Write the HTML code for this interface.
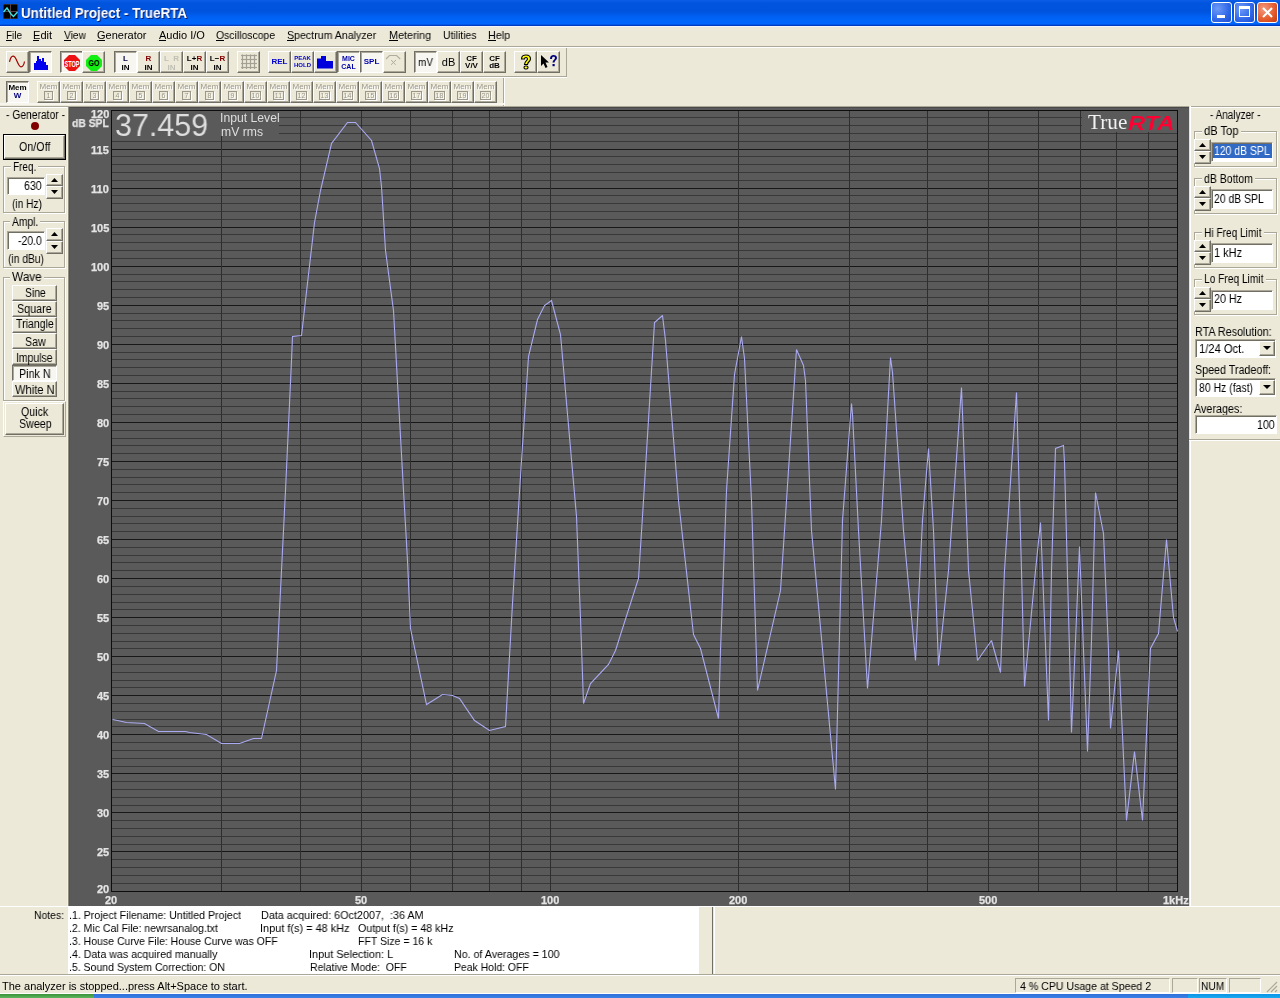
<!DOCTYPE html><html><head><meta charset="utf-8"><title>TrueRTA</title><style>
*{margin:0;padding:0;box-sizing:border-box}
html,body{width:1280px;height:998px;overflow:hidden;background:#ece9d8;font-family:"Liberation Sans",sans-serif;font-size:11px;color:#000}
.a{position:absolute}
.t{position:absolute;white-space:nowrap;line-height:1;will-change:transform}
.btn{position:absolute;background:#ece9d8;border-top:1px solid #fff;border-left:1px solid #fff;border-right:1px solid #716f64;border-bottom:1px solid #716f64;box-shadow:inset -1px -1px 0 #aca899}
.prs{position:absolute;background:#f7f6f1;border-top:1px solid #716f64;border-left:1px solid #716f64;border-right:1px solid #fff;border-bottom:1px solid #fff;box-shadow:inset 1px 1px 0 #aca899}
.grp{position:absolute;border:1px solid #d0d0bf;border-radius:2px}
.edit{position:absolute;background:#fff;border-top:1px solid #aca899;border-left:1px solid #aca899;border-right:1px solid #fff;border-bottom:1px solid #fff;box-shadow:inset 1px 1px 0 #716f64}
u{text-decoration:none;border-bottom:1px solid #000}
</style></head><body>
<div class="a" style="left:0;top:0;width:1280px;height:26px;background:linear-gradient(#0b5fea 0px,#0a5ae4 1px,#0054dd 3px,#0053dc 11px,#005cec 15px,#0064f8 19px,#0066fc 24px,#0046d0 25px,#0036b2 26px)"></div>
<div class="a" style="left:0;top:26px;width:1280px;height:1px;background:#f2f4fa"></div>
<svg class="a" style="left:3px;top:4px" width="15" height="15" viewBox="0 0 15 15"><rect x="0" y="0" width="15" height="15" fill="#555"/><rect x="0.5" y="0.5" width="14" height="14" fill="#000"/><line x1="7.5" y1="0" x2="7.5" y2="15" stroke="#5a4040" stroke-width="1"/><line x1="0" y1="7.5" x2="15" y2="7.5" stroke="#5a4040" stroke-width="1"/><polyline points="0.5,8 4,4 8,10 10.5,12.5 14.5,8" fill="none" stroke="#40e0e0" stroke-width="1.4"/></svg>
<div class="t" style="left:21.00px;top:6.15px;font-size:14px;line-height:14px;font-weight:bold;color:#fff;transform:scaleX(0.9591);transform-origin:0 0;text-shadow:1px 1px 0 #0a1e6e;">Untitled Project - TrueRTA</div>
<div class="a" style="left:1211px;top:2px;width:21px;height:21px;border:1px solid #fff;border-radius:3px;background:radial-gradient(circle at 30% 30%,#6e9bf7,#2f67e8 60%,#1f4fd0)"></div>
<div class="a" style="left:1234px;top:2px;width:21px;height:21px;border:1px solid #fff;border-radius:3px;background:radial-gradient(circle at 30% 30%,#6e9bf7,#2f67e8 60%,#1f4fd0)"></div>
<div class="a" style="left:1257px;top:2px;width:21px;height:21px;border:1px solid #fff;border-radius:3px;background:radial-gradient(circle at 30% 30%,#f49a7c,#e35a2c 60%,#c23d10)"></div>
<div class="a" style="left:1217px;top:15px;width:8px;height:3px;background:#fff"></div>
<div class="a" style="left:1239px;top:6px;width:11px;height:11px;border:1px solid #fff;border-top:3px solid #fff"></div>
<svg class="a" style="left:1257px;top:2px" width="21" height="21"><line x1="6" y1="6" x2="15" y2="15" stroke="#fff" stroke-width="2"/><line x1="15" y1="6" x2="6" y2="15" stroke="#fff" stroke-width="2"/></svg>
<div class="t" style="left:6.00px;top:29.69px;font-size:11px;line-height:11px;transform:scaleX(0.9087);transform-origin:0 0;">File</div>
<div class="t" style="left:33.00px;top:29.69px;font-size:11px;line-height:11px;transform:scaleX(1.0054);transform-origin:0 0;">Edit</div>
<div class="t" style="left:64.00px;top:29.69px;font-size:11px;line-height:11px;transform:scaleX(0.9283);transform-origin:0 0;">View</div>
<div class="t" style="left:97.00px;top:29.69px;font-size:11px;line-height:11px;">Generator</div>
<div class="t" style="left:159.00px;top:29.69px;font-size:11px;line-height:11px;transform:scaleX(0.9935);transform-origin:0 0;">Audio I/O</div>
<div class="t" style="left:216.00px;top:29.69px;font-size:11px;line-height:11px;transform:scaleX(0.9479);transform-origin:0 0;">Oscilloscope</div>
<div class="t" style="left:287.00px;top:29.69px;font-size:11px;line-height:11px;transform:scaleX(0.9650);transform-origin:0 0;">Spectrum Analyzer</div>
<div class="t" style="left:389.00px;top:29.69px;font-size:11px;line-height:11px;transform:scaleX(0.9841);transform-origin:0 0;">Metering</div>
<div class="t" style="left:443.00px;top:29.69px;font-size:11px;line-height:11px;transform:scaleX(0.9458);transform-origin:0 0;">Utilities</div>
<div class="t" style="left:488.00px;top:29.69px;font-size:11px;line-height:11px;transform:scaleX(0.9775);transform-origin:0 0;">Help</div>
<div class="a" style="left:6px;top:40px;width:6px;height:1px;background:#000"></div>
<div class="a" style="left:33px;top:40px;width:6px;height:1px;background:#000"></div>
<div class="a" style="left:64px;top:40px;width:7px;height:1px;background:#000"></div>
<div class="a" style="left:97px;top:40px;width:8px;height:1px;background:#000"></div>
<div class="a" style="left:159px;top:40px;width:7px;height:1px;background:#000"></div>
<div class="a" style="left:216px;top:40px;width:8px;height:1px;background:#000"></div>
<div class="a" style="left:287px;top:40px;width:7px;height:1px;background:#000"></div>
<div class="a" style="left:389px;top:40px;width:9px;height:1px;background:#000"></div>
<div class="a" style="left:488px;top:40px;width:8px;height:1px;background:#000"></div>
<div class="a" style="left:0;top:46px;width:1280px;height:1px;background:#aca899"></div>
<div class="a" style="left:0;top:47px;width:1280px;height:1px;background:#fff"></div>
<div class="a" style="left:0;top:76px;width:567px;height:1px;background:#aca899"></div>
<div class="a" style="left:0;top:77px;width:567px;height:1px;background:#fff"></div>
<div class="a" style="left:566px;top:48px;width:1px;height:29px;background:#aca899"></div>
<div class="a" style="left:503px;top:78px;width:1px;height:28px;background:#aca899"></div>
<div class="a" style="left:504px;top:78px;width:1px;height:28px;background:#fff"></div>
<div class="a" style="left:0;top:103px;width:504px;height:2px;background:#f6f5ee"></div>
<div class="a" style="left:0;top:106px;width:1280px;height:1px;background:#aca899"></div>
<div class="a" style="left:0;top:107px;width:1280px;height:1px;background:#fff"></div>
<div class="btn" style="left:6px;top:51px;width:23px;height:22px"><svg class="a" style="left:0;top:0" width="21" height="20"><path d="M2.5,9.8 C3.5,5.5 4.8,4.2 6,4.2 C8,4.2 9.3,7.5 10,9.2 C11,11.5 12.5,14.8 14,14.8 C15.5,14.8 17,12.5 17.5,9.5" fill="none" stroke="#a00000" stroke-width="1.2"/></svg></div>
<div class="prs" style="left:29px;top:51px;width:23px;height:22px"><svg class="a" style="left:3px;top:3px" width="18" height="16"><path d="M1,15 L1,8 L3,8 L3,6 L4,6 L4,1 L6,1 L6,4 L8,4 L8,6 L9,6 L9,3 L11,3 L11,7 L13,7 L13,10 L15,10 L15,15 Z" fill="#0000ee"/></svg></div>
<div class="prs" style="left:60px;top:51px;width:23px;height:22px"><svg class="a" style="left:3px;top:3px" width="16" height="16"><polygon points="5,0 11,0 16,5 16,11 11,16 5,16 0,11 0,5" fill="#ee1111"/><text x="0.5" y="11.8" font-family="Liberation Sans" font-weight="bold" font-size="9" fill="#fff" textLength="15" lengthAdjust="spacingAndGlyphs">STOP</text></svg></div>
<div class="btn" style="left:82px;top:51px;width:23px;height:22px"><svg class="a" style="left:3px;top:3px" width="16" height="16"><polygon points="5,0 11,0 16,5 16,11 11,16 5,16 0,11 0,5" fill="#11ee11"/><text x="2.5" y="11" font-family="Liberation Sans" font-weight="bold" font-size="9" fill="#000" textLength="11" lengthAdjust="spacingAndGlyphs">GO</text></svg></div>
<div class="prs" style="left:114px;top:51px;width:23px;height:22px"><div class="t" style="left:0;width:21px;top:3px;text-align:center;font-size:8px;font-weight:bold;color:#000040">L</div><div class="t" style="left:0;width:21px;top:12px;text-align:center;font-size:8px;font-weight:bold">IN</div></div>
<div class="btn" style="left:137px;top:51px;width:23px;height:22px"><div class="t" style="left:0;width:21px;top:3px;text-align:center;font-size:8px;font-weight:bold;color:#800000">R</div><div class="t" style="left:0;width:21px;top:12px;text-align:center;font-size:8px;font-weight:bold">IN</div></div>
<div class="btn" style="left:160px;top:51px;width:23px;height:22px"><div class="t" style="left:0;width:21px;top:3px;text-align:center;font-size:8px;font-weight:bold;color:#c0bfb4">L&nbsp;&nbsp;R</div><div class="t" style="left:0;width:21px;top:12px;text-align:center;font-size:8px;font-weight:bold;color:#c0bfb4">IN</div></div>
<div class="btn" style="left:183px;top:51px;width:23px;height:22px"><div class="t" style="left:0;width:21px;top:3px;text-align:center;font-size:8px;font-weight:bold">L+<span style="color:#800000">R</span></div><div class="t" style="left:0;width:21px;top:12px;text-align:center;font-size:8px;font-weight:bold">IN</div></div>
<div class="btn" style="left:206px;top:51px;width:23px;height:22px"><div class="t" style="left:0;width:21px;top:3px;text-align:center;font-size:8px;font-weight:bold">L&minus;<span style="color:#800000">R</span></div><div class="t" style="left:0;width:21px;top:12px;text-align:center;font-size:8px;font-weight:bold">IN</div></div>
<div class="btn" style="left:237px;top:51px;width:23px;height:22px"><svg class="a" style="left:3px;top:2px" width="16" height="16"><line x1="1.5" y1="0.5" x2="1.5" y2="15" stroke="#a4a194" stroke-width="1.2"/><line x1="5.5" y1="0.5" x2="5.5" y2="15" stroke="#a4a194" stroke-width="1.2"/><line x1="9.5" y1="0.5" x2="9.5" y2="15" stroke="#a4a194" stroke-width="1.2"/><line x1="13.5" y1="0.5" x2="13.5" y2="15" stroke="#a4a194" stroke-width="1.2"/><line x1="0" y1="1.5" x2="16" y2="1.5" stroke="#a4a194" stroke-width="1.2"/><line x1="0" y1="5.5" x2="16" y2="5.5" stroke="#a4a194" stroke-width="1.2"/><line x1="0" y1="9.5" x2="16" y2="9.5" stroke="#a4a194" stroke-width="1.2"/><line x1="0" y1="13.5" x2="16" y2="13.5" stroke="#a4a194" stroke-width="1.2"/></svg></div>
<div class="btn" style="left:268px;top:51px;width:23px;height:22px"><div class="t" style="left:0;width:21px;top:6px;text-align:center;font-size:8px;font-weight:bold;color:#0000cc">REL</div></div>
<div class="btn" style="left:291px;top:51px;width:23px;height:22px"><div class="t" style="left:0;width:21px;top:3px;text-align:center;font-size:6px;font-weight:bold;color:#0000cc;line-height:7px">PEAK<br>HOLD</div></div>
<div class="btn" style="left:314px;top:51px;width:23px;height:22px"><svg class="a" style="left:2px;top:4px" width="17" height="13"><path d="M0,12.5 L0,2.5 L4,2.5 L4,0 L9,0 L9,5 L16,5 L16,12.5 Z" fill="#0000dd"/></svg></div>
<div class="prs" style="left:337px;top:51px;width:23px;height:22px"><div class="t" style="left:0;width:21px;top:3px;text-align:center;font-size:7px;font-weight:bold;color:#0000aa;line-height:8px">MIC<br>CAL</div></div>
<div class="prs" style="left:360px;top:51px;width:23px;height:22px"><div class="t" style="left:0;width:21px;top:6px;text-align:center;font-size:8px;font-weight:bold;color:#0000aa">SPL</div></div>
<div class="btn" style="left:383px;top:51px;width:23px;height:22px"><svg class="a" style="left:0;top:0" width="21" height="20"><path d="M2,7 L5.5,3.5 L12.6,3.5 L16.2,7" fill="none" stroke="#b0ada0" stroke-width="1.1"/><path d="M7.2,8 L11.6,12.8 M12,8 L7,12.8" stroke="#b0ada0" stroke-width="1"/></svg></div>
<div class="prs" style="left:414px;top:51px;width:23px;height:22px"><div class="t" style="left:0;width:21px;top:5px;text-align:center;font-size:11px;line-height:11px;transform:scaleX(0.9)">mV</div></div>
<div class="btn" style="left:437px;top:51px;width:23px;height:22px"><div class="t" style="left:0;width:21px;top:5px;text-align:center;font-size:11px;line-height:11px">dB</div></div>
<div class="btn" style="left:460px;top:51px;width:23px;height:22px"><div class="t" style="left:0;width:21px;top:3px;text-align:center;font-size:8px;font-weight:bold;line-height:7px">CF<br>V/V</div></div>
<div class="btn" style="left:483px;top:51px;width:23px;height:22px"><div class="t" style="left:0;width:21px;top:3px;text-align:center;font-size:8px;font-weight:bold;line-height:7px">CF<br>dB</div></div>
<div class="btn" style="left:514px;top:51px;width:23px;height:22px"><svg class="a" style="left:4px;top:2px" width="14" height="17"><path d="M2.5,5 C2.5,1.5 5,1 7,1 C9.5,1 11.5,2.5 11.5,5 C11.5,7.5 8.5,8 8.5,10.5 L5.5,10.5 C5.5,7 8.5,6.5 8.5,5 C8.5,4 8,3.5 7,3.5 C6,3.5 5.5,4.2 5.5,5 Z" fill="#ffff00" stroke="#000" stroke-width="1.1"/><rect x="5" y="12" width="4" height="3" rx="1.5" fill="#ffff00" stroke="#000" stroke-width="1.1"/></svg></div>
<div class="btn" style="left:537px;top:51px;width:23px;height:22px"><svg class="a" style="left:2px;top:2px" width="19" height="17"><path d="M1,1 L1,12 L3.5,9.5 L5.5,14 L7.5,13 L5.5,8.5 L9,8.5 Z" fill="#000"/><path d="M10,5 C10,2 11.5,1 13.5,1 C15.5,1 17,2 17,4 C17,6 14.5,6.5 14.5,8.5 L12.5,8.5 C12.5,6 15,5.5 15,4 C15,3 14.5,2.7 13.5,2.7 C12.5,2.7 12,3.3 12,5 Z" fill="#000080"/><rect x="12.5" y="10" width="2.2" height="2.2" fill="#000080"/></svg></div>
<div class="prs" style="left:6px;top:81px;width:23px;height:22px"><div class="t" style="left:0;width:21px;top:2px;text-align:center;font-size:8px;font-weight:bold;line-height:8px">Mem</div><div class="t" style="left:0;width:21px;top:10px;text-align:center;font-size:8px;font-weight:bold;color:#000080;line-height:8px">W</div></div>
<div class="btn" style="left:37px;top:81px;width:23px;height:22px"><div class="t" style="left:0;width:21px;top:1px;text-align:center;font-size:8px;color:#9a978a;line-height:8px;text-shadow:1px 1px 0 #fff">Mem</div><div class="a" style="left:6px;top:9px;width:9px;height:9px;border:1px solid #9a978a;box-shadow:1px 1px 0 #fff"></div><div class="t" style="left:0;width:21px;top:10px;text-align:center;font-size:7px;color:#9a978a;line-height:8px;text-shadow:1px 1px 0 #fff">1</div></div>
<div class="btn" style="left:60px;top:81px;width:23px;height:22px"><div class="t" style="left:0;width:21px;top:1px;text-align:center;font-size:8px;color:#9a978a;line-height:8px;text-shadow:1px 1px 0 #fff">Mem</div><div class="a" style="left:6px;top:9px;width:9px;height:9px;border:1px solid #9a978a;box-shadow:1px 1px 0 #fff"></div><div class="t" style="left:0;width:21px;top:10px;text-align:center;font-size:7px;color:#9a978a;line-height:8px;text-shadow:1px 1px 0 #fff">2</div></div>
<div class="btn" style="left:83px;top:81px;width:23px;height:22px"><div class="t" style="left:0;width:21px;top:1px;text-align:center;font-size:8px;color:#9a978a;line-height:8px;text-shadow:1px 1px 0 #fff">Mem</div><div class="a" style="left:6px;top:9px;width:9px;height:9px;border:1px solid #9a978a;box-shadow:1px 1px 0 #fff"></div><div class="t" style="left:0;width:21px;top:10px;text-align:center;font-size:7px;color:#9a978a;line-height:8px;text-shadow:1px 1px 0 #fff">3</div></div>
<div class="btn" style="left:106px;top:81px;width:23px;height:22px"><div class="t" style="left:0;width:21px;top:1px;text-align:center;font-size:8px;color:#9a978a;line-height:8px;text-shadow:1px 1px 0 #fff">Mem</div><div class="a" style="left:6px;top:9px;width:9px;height:9px;border:1px solid #9a978a;box-shadow:1px 1px 0 #fff"></div><div class="t" style="left:0;width:21px;top:10px;text-align:center;font-size:7px;color:#9a978a;line-height:8px;text-shadow:1px 1px 0 #fff">4</div></div>
<div class="btn" style="left:129px;top:81px;width:23px;height:22px"><div class="t" style="left:0;width:21px;top:1px;text-align:center;font-size:8px;color:#9a978a;line-height:8px;text-shadow:1px 1px 0 #fff">Mem</div><div class="a" style="left:6px;top:9px;width:9px;height:9px;border:1px solid #9a978a;box-shadow:1px 1px 0 #fff"></div><div class="t" style="left:0;width:21px;top:10px;text-align:center;font-size:7px;color:#9a978a;line-height:8px;text-shadow:1px 1px 0 #fff">5</div></div>
<div class="btn" style="left:152px;top:81px;width:23px;height:22px"><div class="t" style="left:0;width:21px;top:1px;text-align:center;font-size:8px;color:#9a978a;line-height:8px;text-shadow:1px 1px 0 #fff">Mem</div><div class="a" style="left:6px;top:9px;width:9px;height:9px;border:1px solid #9a978a;box-shadow:1px 1px 0 #fff"></div><div class="t" style="left:0;width:21px;top:10px;text-align:center;font-size:7px;color:#9a978a;line-height:8px;text-shadow:1px 1px 0 #fff">6</div></div>
<div class="btn" style="left:175px;top:81px;width:23px;height:22px"><div class="t" style="left:0;width:21px;top:1px;text-align:center;font-size:8px;color:#9a978a;line-height:8px;text-shadow:1px 1px 0 #fff">Mem</div><div class="a" style="left:6px;top:9px;width:9px;height:9px;border:1px solid #9a978a;box-shadow:1px 1px 0 #fff"></div><div class="t" style="left:0;width:21px;top:10px;text-align:center;font-size:7px;color:#9a978a;line-height:8px;text-shadow:1px 1px 0 #fff">7</div></div>
<div class="btn" style="left:198px;top:81px;width:23px;height:22px"><div class="t" style="left:0;width:21px;top:1px;text-align:center;font-size:8px;color:#9a978a;line-height:8px;text-shadow:1px 1px 0 #fff">Mem</div><div class="a" style="left:6px;top:9px;width:9px;height:9px;border:1px solid #9a978a;box-shadow:1px 1px 0 #fff"></div><div class="t" style="left:0;width:21px;top:10px;text-align:center;font-size:7px;color:#9a978a;line-height:8px;text-shadow:1px 1px 0 #fff">8</div></div>
<div class="btn" style="left:221px;top:81px;width:23px;height:22px"><div class="t" style="left:0;width:21px;top:1px;text-align:center;font-size:8px;color:#9a978a;line-height:8px;text-shadow:1px 1px 0 #fff">Mem</div><div class="a" style="left:6px;top:9px;width:9px;height:9px;border:1px solid #9a978a;box-shadow:1px 1px 0 #fff"></div><div class="t" style="left:0;width:21px;top:10px;text-align:center;font-size:7px;color:#9a978a;line-height:8px;text-shadow:1px 1px 0 #fff">9</div></div>
<div class="btn" style="left:244px;top:81px;width:23px;height:22px"><div class="t" style="left:0;width:21px;top:1px;text-align:center;font-size:8px;color:#9a978a;line-height:8px;text-shadow:1px 1px 0 #fff">Mem</div><div class="a" style="left:5px;top:9px;width:11px;height:9px;border:1px solid #9a978a;box-shadow:1px 1px 0 #fff"></div><div class="t" style="left:0;width:21px;top:10px;text-align:center;font-size:7px;color:#9a978a;line-height:8px;text-shadow:1px 1px 0 #fff">10</div></div>
<div class="btn" style="left:267px;top:81px;width:23px;height:22px"><div class="t" style="left:0;width:21px;top:1px;text-align:center;font-size:8px;color:#9a978a;line-height:8px;text-shadow:1px 1px 0 #fff">Mem</div><div class="a" style="left:5px;top:9px;width:11px;height:9px;border:1px solid #9a978a;box-shadow:1px 1px 0 #fff"></div><div class="t" style="left:0;width:21px;top:10px;text-align:center;font-size:7px;color:#9a978a;line-height:8px;text-shadow:1px 1px 0 #fff">11</div></div>
<div class="btn" style="left:290px;top:81px;width:23px;height:22px"><div class="t" style="left:0;width:21px;top:1px;text-align:center;font-size:8px;color:#9a978a;line-height:8px;text-shadow:1px 1px 0 #fff">Mem</div><div class="a" style="left:5px;top:9px;width:11px;height:9px;border:1px solid #9a978a;box-shadow:1px 1px 0 #fff"></div><div class="t" style="left:0;width:21px;top:10px;text-align:center;font-size:7px;color:#9a978a;line-height:8px;text-shadow:1px 1px 0 #fff">12</div></div>
<div class="btn" style="left:313px;top:81px;width:23px;height:22px"><div class="t" style="left:0;width:21px;top:1px;text-align:center;font-size:8px;color:#9a978a;line-height:8px;text-shadow:1px 1px 0 #fff">Mem</div><div class="a" style="left:5px;top:9px;width:11px;height:9px;border:1px solid #9a978a;box-shadow:1px 1px 0 #fff"></div><div class="t" style="left:0;width:21px;top:10px;text-align:center;font-size:7px;color:#9a978a;line-height:8px;text-shadow:1px 1px 0 #fff">13</div></div>
<div class="btn" style="left:336px;top:81px;width:23px;height:22px"><div class="t" style="left:0;width:21px;top:1px;text-align:center;font-size:8px;color:#9a978a;line-height:8px;text-shadow:1px 1px 0 #fff">Mem</div><div class="a" style="left:5px;top:9px;width:11px;height:9px;border:1px solid #9a978a;box-shadow:1px 1px 0 #fff"></div><div class="t" style="left:0;width:21px;top:10px;text-align:center;font-size:7px;color:#9a978a;line-height:8px;text-shadow:1px 1px 0 #fff">14</div></div>
<div class="btn" style="left:359px;top:81px;width:23px;height:22px"><div class="t" style="left:0;width:21px;top:1px;text-align:center;font-size:8px;color:#9a978a;line-height:8px;text-shadow:1px 1px 0 #fff">Mem</div><div class="a" style="left:5px;top:9px;width:11px;height:9px;border:1px solid #9a978a;box-shadow:1px 1px 0 #fff"></div><div class="t" style="left:0;width:21px;top:10px;text-align:center;font-size:7px;color:#9a978a;line-height:8px;text-shadow:1px 1px 0 #fff">15</div></div>
<div class="btn" style="left:382px;top:81px;width:23px;height:22px"><div class="t" style="left:0;width:21px;top:1px;text-align:center;font-size:8px;color:#9a978a;line-height:8px;text-shadow:1px 1px 0 #fff">Mem</div><div class="a" style="left:5px;top:9px;width:11px;height:9px;border:1px solid #9a978a;box-shadow:1px 1px 0 #fff"></div><div class="t" style="left:0;width:21px;top:10px;text-align:center;font-size:7px;color:#9a978a;line-height:8px;text-shadow:1px 1px 0 #fff">16</div></div>
<div class="btn" style="left:405px;top:81px;width:23px;height:22px"><div class="t" style="left:0;width:21px;top:1px;text-align:center;font-size:8px;color:#9a978a;line-height:8px;text-shadow:1px 1px 0 #fff">Mem</div><div class="a" style="left:5px;top:9px;width:11px;height:9px;border:1px solid #9a978a;box-shadow:1px 1px 0 #fff"></div><div class="t" style="left:0;width:21px;top:10px;text-align:center;font-size:7px;color:#9a978a;line-height:8px;text-shadow:1px 1px 0 #fff">17</div></div>
<div class="btn" style="left:428px;top:81px;width:23px;height:22px"><div class="t" style="left:0;width:21px;top:1px;text-align:center;font-size:8px;color:#9a978a;line-height:8px;text-shadow:1px 1px 0 #fff">Mem</div><div class="a" style="left:5px;top:9px;width:11px;height:9px;border:1px solid #9a978a;box-shadow:1px 1px 0 #fff"></div><div class="t" style="left:0;width:21px;top:10px;text-align:center;font-size:7px;color:#9a978a;line-height:8px;text-shadow:1px 1px 0 #fff">18</div></div>
<div class="btn" style="left:451px;top:81px;width:23px;height:22px"><div class="t" style="left:0;width:21px;top:1px;text-align:center;font-size:8px;color:#9a978a;line-height:8px;text-shadow:1px 1px 0 #fff">Mem</div><div class="a" style="left:5px;top:9px;width:11px;height:9px;border:1px solid #9a978a;box-shadow:1px 1px 0 #fff"></div><div class="t" style="left:0;width:21px;top:10px;text-align:center;font-size:7px;color:#9a978a;line-height:8px;text-shadow:1px 1px 0 #fff">19</div></div>
<div class="btn" style="left:474px;top:81px;width:23px;height:22px"><div class="t" style="left:0;width:21px;top:1px;text-align:center;font-size:8px;color:#9a978a;line-height:8px;text-shadow:1px 1px 0 #fff">Mem</div><div class="a" style="left:5px;top:9px;width:11px;height:9px;border:1px solid #9a978a;box-shadow:1px 1px 0 #fff"></div><div class="t" style="left:0;width:21px;top:10px;text-align:center;font-size:7px;color:#9a978a;line-height:8px;text-shadow:1px 1px 0 #fff">20</div></div>
<div class="a" style="left:0;top:108px;width:69px;height:798px;background:#ece9d8"></div>
<div class="a" style="left:67px;top:107px;width:2px;height:799px;background:linear-gradient(90deg,#f3f1e6 0 1px,#8f8c80 1px)"></div>
<div class="t" style="left:6.00px;top:108.84px;font-size:12px;line-height:12px;transform:scaleX(0.8589);transform-origin:0 0;">- Generator -</div>
<div class="a" style="left:31px;top:122px;width:8px;height:8px;border-radius:50%;background:#800000"></div>
<div class="a" style="left:3px;top:134px;width:63px;height:26px;border:1px solid #000"><div class="btn" style="left:0;top:0;width:61px;height:24px"></div></div>
<div class="t" style="left:19.00px;top:140.84px;font-size:12px;line-height:12px;transform:scaleX(0.8940);transform-origin:0 0;">On/Off</div>
<div class="a" style="left:3px;top:166px;width:62px;height:47px;border:1px solid #aca899;box-shadow:1px 1px 0 #fff, inset 1px 1px 0 #fff"></div>
<div class="a" style="left:11px;top:165px;width:27px;height:4px;background:#ece9d8"></div>
<div class="t" style="left:13.00px;top:160.84px;font-size:12px;line-height:12px;transform:scaleX(0.8311);transform-origin:0 0;">Freq.</div>
<div class="edit" style="left:7px;top:177px;width:38px;height:18px"></div>
<div class="t" style="left:24.00px;top:179.84px;font-size:12px;line-height:12px;transform:scaleX(0.8846);transform-origin:0 0;">630</div>
<div class="btn" style="left:46px;top:174px;width:17px;height:12px"><svg class="a" style="left:4px;top:3px" width="7" height="4"><polygon points="3.5,0 7,4 0,4" fill="#000"/></svg></div>
<div class="btn" style="left:46px;top:186px;width:17px;height:13px"><svg class="a" style="left:4px;top:3px" width="7" height="4"><polygon points="0,0 7,0 3.5,4" fill="#000"/></svg></div>
<div class="t" style="left:12.00px;top:197.84px;font-size:12px;line-height:12px;transform:scaleX(0.8490);transform-origin:0 0;">(in Hz)</div>
<div class="a" style="left:3px;top:221px;width:62px;height:47px;border:1px solid #aca899;box-shadow:1px 1px 0 #fff, inset 1px 1px 0 #fff"></div>
<div class="a" style="left:10px;top:220px;width:30px;height:4px;background:#ece9d8"></div>
<div class="t" style="left:12.00px;top:215.84px;font-size:12px;line-height:12px;transform:scaleX(0.8570);transform-origin:0 0;">Ampl.</div>
<div class="edit" style="left:7px;top:231px;width:38px;height:19px"></div>
<div class="t" style="left:18.00px;top:234.84px;font-size:12px;line-height:12px;transform:scaleX(0.8671);transform-origin:0 0;">-20.0</div>
<div class="btn" style="left:46px;top:228px;width:17px;height:13px"><svg class="a" style="left:4px;top:3px" width="7" height="4"><polygon points="3.5,0 7,4 0,4" fill="#000"/></svg></div>
<div class="btn" style="left:46px;top:241px;width:17px;height:13px"><svg class="a" style="left:4px;top:3px" width="7" height="4"><polygon points="0,0 7,0 3.5,4" fill="#000"/></svg></div>
<div class="t" style="left:8.00px;top:252.84px;font-size:12px;line-height:12px;transform:scaleX(0.8567);transform-origin:0 0;">(in dBu)</div>
<div class="a" style="left:3px;top:277px;width:62px;height:124px;border:1px solid #aca899;box-shadow:1px 1px 0 #fff, inset 1px 1px 0 #fff"></div>
<div class="a" style="left:10px;top:276px;width:34px;height:4px;background:#ece9d8"></div>
<div class="t" style="left:12.00px;top:270.84px;font-size:12px;line-height:12px;transform:scaleX(0.9818);transform-origin:0 0;">Wave</div>
<div class="btn" style="left:12px;top:285px;width:45px;height:16px"></div>
<div class="t" style="left:25.00px;top:286.84px;font-size:12px;line-height:12px;transform:scaleX(0.8626);transform-origin:0 0;">Sine</div>
<div class="btn" style="left:12px;top:301px;width:45px;height:16px"></div>
<div class="t" style="left:17.00px;top:302.84px;font-size:12px;line-height:12px;transform:scaleX(0.8969);transform-origin:0 0;">Square</div>
<div class="btn" style="left:12px;top:317px;width:45px;height:16px"></div>
<div class="t" style="left:16.00px;top:317.84px;font-size:12px;line-height:12px;transform:scaleX(0.8789);transform-origin:0 0;">Triangle</div>
<div class="btn" style="left:12px;top:333px;width:45px;height:16px"></div>
<div class="t" style="left:25.00px;top:335.84px;font-size:12px;line-height:12px;transform:scaleX(0.8869);transform-origin:0 0;">Saw</div>
<div class="btn" style="left:12px;top:349px;width:45px;height:16px"></div>
<div class="t" style="left:16.13px;top:351.84px;font-size:12px;line-height:12px;transform:scaleX(0.8707);transform-origin:0 0;">Impulse</div>
<div class="prs" style="left:12px;top:365px;width:45px;height:16px"></div>
<div class="t" style="left:19.00px;top:367.84px;font-size:12px;line-height:12px;transform:scaleX(0.8939);transform-origin:0 0;">Pink N</div>
<div class="btn" style="left:12px;top:381px;width:45px;height:16px"></div>
<div class="t" style="left:15.00px;top:383.84px;font-size:12px;line-height:12px;transform:scaleX(0.9284);transform-origin:0 0;">White N</div>
<div class="a" style="left:3px;top:401px;width:63px;height:36px;border-top:1px solid #fff;border-left:1px solid #fff;border-right:1px solid #aca899;border-bottom:1px solid #aca899"></div>
<div class="btn" style="left:5px;top:403px;width:59px;height:32px"></div>
<div class="t" style="left:21.00px;top:405.84px;font-size:12px;line-height:12px;transform:scaleX(0.8840);transform-origin:0 0;">Quick</div>
<div class="t" style="left:19.00px;top:417.84px;font-size:12px;line-height:12px;transform:scaleX(0.8915);transform-origin:0 0;">Sweep</div>
<svg class="a" style="left:69px;top:107px" width="1120" height="799" shape-rendering="crispEdges">
<rect x="0" y="0" width="1120" height="799" fill="#5a5a5a"/><rect x="0" y="0" width="1120" height="1" fill="#4a4a48"/><rect x="0" y="0" width="1" height="799" fill="#55554f"/>
<line x1="42" y1="776.5" x2="1108" y2="776.5" stroke="#383838"/>
<line x1="42" y1="768.5" x2="1108" y2="768.5" stroke="#383838"/>
<line x1="42" y1="760.5" x2="1108" y2="760.5" stroke="#383838"/>
<line x1="42" y1="752.5" x2="1108" y2="752.5" stroke="#383838"/>
<line x1="42" y1="744.5" x2="1108" y2="744.5" stroke="#181818"/>
<line x1="42" y1="737.5" x2="1108" y2="737.5" stroke="#383838"/>
<line x1="42" y1="729.5" x2="1108" y2="729.5" stroke="#383838"/>
<line x1="42" y1="721.5" x2="1108" y2="721.5" stroke="#383838"/>
<line x1="42" y1="713.5" x2="1108" y2="713.5" stroke="#383838"/>
<line x1="42" y1="705.5" x2="1108" y2="705.5" stroke="#181818"/>
<line x1="42" y1="698.5" x2="1108" y2="698.5" stroke="#383838"/>
<line x1="42" y1="690.5" x2="1108" y2="690.5" stroke="#383838"/>
<line x1="42" y1="682.5" x2="1108" y2="682.5" stroke="#383838"/>
<line x1="42" y1="674.5" x2="1108" y2="674.5" stroke="#383838"/>
<line x1="42" y1="666.5" x2="1108" y2="666.5" stroke="#181818"/>
<line x1="42" y1="659.5" x2="1108" y2="659.5" stroke="#383838"/>
<line x1="42" y1="651.5" x2="1108" y2="651.5" stroke="#383838"/>
<line x1="42" y1="643.5" x2="1108" y2="643.5" stroke="#383838"/>
<line x1="42" y1="635.5" x2="1108" y2="635.5" stroke="#383838"/>
<line x1="42" y1="627.5" x2="1108" y2="627.5" stroke="#181818"/>
<line x1="42" y1="619.5" x2="1108" y2="619.5" stroke="#383838"/>
<line x1="42" y1="612.5" x2="1108" y2="612.5" stroke="#383838"/>
<line x1="42" y1="604.5" x2="1108" y2="604.5" stroke="#383838"/>
<line x1="42" y1="596.5" x2="1108" y2="596.5" stroke="#383838"/>
<line x1="42" y1="588.5" x2="1108" y2="588.5" stroke="#181818"/>
<line x1="42" y1="580.5" x2="1108" y2="580.5" stroke="#383838"/>
<line x1="42" y1="573.5" x2="1108" y2="573.5" stroke="#383838"/>
<line x1="42" y1="565.5" x2="1108" y2="565.5" stroke="#383838"/>
<line x1="42" y1="557.5" x2="1108" y2="557.5" stroke="#383838"/>
<line x1="42" y1="549.5" x2="1108" y2="549.5" stroke="#181818"/>
<line x1="42" y1="541.5" x2="1108" y2="541.5" stroke="#383838"/>
<line x1="42" y1="534.5" x2="1108" y2="534.5" stroke="#383838"/>
<line x1="42" y1="526.5" x2="1108" y2="526.5" stroke="#383838"/>
<line x1="42" y1="518.5" x2="1108" y2="518.5" stroke="#383838"/>
<line x1="42" y1="510.5" x2="1108" y2="510.5" stroke="#181818"/>
<line x1="42" y1="502.5" x2="1108" y2="502.5" stroke="#383838"/>
<line x1="42" y1="495.5" x2="1108" y2="495.5" stroke="#383838"/>
<line x1="42" y1="487.5" x2="1108" y2="487.5" stroke="#383838"/>
<line x1="42" y1="479.5" x2="1108" y2="479.5" stroke="#383838"/>
<line x1="42" y1="471.5" x2="1108" y2="471.5" stroke="#181818"/>
<line x1="42" y1="463.5" x2="1108" y2="463.5" stroke="#383838"/>
<line x1="42" y1="455.5" x2="1108" y2="455.5" stroke="#383838"/>
<line x1="42" y1="448.5" x2="1108" y2="448.5" stroke="#383838"/>
<line x1="42" y1="440.5" x2="1108" y2="440.5" stroke="#383838"/>
<line x1="42" y1="432.5" x2="1108" y2="432.5" stroke="#181818"/>
<line x1="42" y1="424.5" x2="1108" y2="424.5" stroke="#383838"/>
<line x1="42" y1="416.5" x2="1108" y2="416.5" stroke="#383838"/>
<line x1="42" y1="409.5" x2="1108" y2="409.5" stroke="#383838"/>
<line x1="42" y1="401.5" x2="1108" y2="401.5" stroke="#383838"/>
<line x1="42" y1="393.5" x2="1108" y2="393.5" stroke="#181818"/>
<line x1="42" y1="385.5" x2="1108" y2="385.5" stroke="#383838"/>
<line x1="42" y1="377.5" x2="1108" y2="377.5" stroke="#383838"/>
<line x1="42" y1="370.5" x2="1108" y2="370.5" stroke="#383838"/>
<line x1="42" y1="362.5" x2="1108" y2="362.5" stroke="#383838"/>
<line x1="42" y1="354.5" x2="1108" y2="354.5" stroke="#181818"/>
<line x1="42" y1="346.5" x2="1108" y2="346.5" stroke="#383838"/>
<line x1="42" y1="338.5" x2="1108" y2="338.5" stroke="#383838"/>
<line x1="42" y1="331.5" x2="1108" y2="331.5" stroke="#383838"/>
<line x1="42" y1="323.5" x2="1108" y2="323.5" stroke="#383838"/>
<line x1="42" y1="315.5" x2="1108" y2="315.5" stroke="#181818"/>
<line x1="42" y1="307.5" x2="1108" y2="307.5" stroke="#383838"/>
<line x1="42" y1="299.5" x2="1108" y2="299.5" stroke="#383838"/>
<line x1="42" y1="291.5" x2="1108" y2="291.5" stroke="#383838"/>
<line x1="42" y1="284.5" x2="1108" y2="284.5" stroke="#383838"/>
<line x1="42" y1="276.5" x2="1108" y2="276.5" stroke="#181818"/>
<line x1="42" y1="268.5" x2="1108" y2="268.5" stroke="#383838"/>
<line x1="42" y1="260.5" x2="1108" y2="260.5" stroke="#383838"/>
<line x1="42" y1="252.5" x2="1108" y2="252.5" stroke="#383838"/>
<line x1="42" y1="245.5" x2="1108" y2="245.5" stroke="#383838"/>
<line x1="42" y1="237.5" x2="1108" y2="237.5" stroke="#181818"/>
<line x1="42" y1="229.5" x2="1108" y2="229.5" stroke="#383838"/>
<line x1="42" y1="221.5" x2="1108" y2="221.5" stroke="#383838"/>
<line x1="42" y1="213.5" x2="1108" y2="213.5" stroke="#383838"/>
<line x1="42" y1="206.5" x2="1108" y2="206.5" stroke="#383838"/>
<line x1="42" y1="198.5" x2="1108" y2="198.5" stroke="#181818"/>
<line x1="42" y1="190.5" x2="1108" y2="190.5" stroke="#383838"/>
<line x1="42" y1="182.5" x2="1108" y2="182.5" stroke="#383838"/>
<line x1="42" y1="174.5" x2="1108" y2="174.5" stroke="#383838"/>
<line x1="42" y1="167.5" x2="1108" y2="167.5" stroke="#383838"/>
<line x1="42" y1="159.5" x2="1108" y2="159.5" stroke="#181818"/>
<line x1="42" y1="151.5" x2="1108" y2="151.5" stroke="#383838"/>
<line x1="42" y1="143.5" x2="1108" y2="143.5" stroke="#383838"/>
<line x1="42" y1="135.5" x2="1108" y2="135.5" stroke="#383838"/>
<line x1="42" y1="127.5" x2="1108" y2="127.5" stroke="#383838"/>
<line x1="42" y1="120.5" x2="1108" y2="120.5" stroke="#181818"/>
<line x1="42" y1="112.5" x2="1108" y2="112.5" stroke="#383838"/>
<line x1="42" y1="104.5" x2="1108" y2="104.5" stroke="#383838"/>
<line x1="42" y1="96.5" x2="1108" y2="96.5" stroke="#383838"/>
<line x1="42" y1="88.5" x2="1108" y2="88.5" stroke="#383838"/>
<line x1="42" y1="81.5" x2="1108" y2="81.5" stroke="#181818"/>
<line x1="42" y1="73.5" x2="1108" y2="73.5" stroke="#383838"/>
<line x1="42" y1="65.5" x2="1108" y2="65.5" stroke="#383838"/>
<line x1="42" y1="57.5" x2="1108" y2="57.5" stroke="#383838"/>
<line x1="42" y1="49.5" x2="1108" y2="49.5" stroke="#383838"/>
<line x1="42" y1="42.5" x2="1108" y2="42.5" stroke="#181818"/>
<line x1="42" y1="34.5" x2="1108" y2="34.5" stroke="#383838"/>
<line x1="42" y1="26.5" x2="1108" y2="26.5" stroke="#383838"/>
<line x1="42" y1="18.5" x2="1108" y2="18.5" stroke="#383838"/>
<line x1="42" y1="10.5" x2="1108" y2="10.5" stroke="#383838"/>
<line x1="152.5" y1="3" x2="152.5" y2="784" stroke="#2e2e2e"/>
<line x1="231.5" y1="3" x2="231.5" y2="784" stroke="#2e2e2e"/>
<line x1="292.5" y1="3" x2="292.5" y2="784" stroke="#2e2e2e"/>
<line x1="341.5" y1="3" x2="341.5" y2="784" stroke="#2e2e2e"/>
<line x1="383.5" y1="3" x2="383.5" y2="784" stroke="#2e2e2e"/>
<line x1="420.5" y1="3" x2="420.5" y2="784" stroke="#2e2e2e"/>
<line x1="452.5" y1="3" x2="452.5" y2="784" stroke="#2e2e2e"/>
<line x1="481.5" y1="3" x2="481.5" y2="784" stroke="#2e2e2e"/>
<line x1="669.5" y1="3" x2="669.5" y2="784" stroke="#2e2e2e"/>
<line x1="780.5" y1="3" x2="780.5" y2="784" stroke="#2e2e2e"/>
<line x1="858.5" y1="3" x2="858.5" y2="784" stroke="#2e2e2e"/>
<line x1="919.5" y1="3" x2="919.5" y2="784" stroke="#2e2e2e"/>
<line x1="969.5" y1="3" x2="969.5" y2="784" stroke="#2e2e2e"/>
<line x1="1011.5" y1="3" x2="1011.5" y2="784" stroke="#2e2e2e"/>
<line x1="1047.5" y1="3" x2="1047.5" y2="784" stroke="#2e2e2e"/>
<line x1="1079.5" y1="3" x2="1079.5" y2="784" stroke="#2e2e2e"/>
<rect x="42.5" y="3.5" width="1066" height="781" fill="none" stroke="#0e0e0e"/>
<rect x="43" y="4" width="167" height="25" fill="#5a5a5a"/>
<rect x="1013" y="4" width="95" height="21" fill="#5a5a5a"/>
</svg>
<svg class="a" style="left:69px;top:107px" width="1120" height="799"><polyline points="43.5,612.5 48.5,613.5 57.5,615.5 75.5,616.5 89.5,624.5 116.5,624.5 120.5,625.5 137.5,627.5 152.5,636.5 170.5,636.5 184.5,631.5 192.5,631.5 207.5,563.5 216.5,383.5 222.5,253.5 223.5,229.5 232.5,228.5 236.5,193.5 245.5,115.5 251.5,83.5 262.5,36.5 278.5,15.5 286.5,15.5 302.5,33.5 310.5,61.5 312.5,79.5 316.5,143.5 324.5,203.5 334.5,383.5 338.5,453.5 341.5,521.5 357.5,597.5 373.5,587.5 383.5,588.5 390.5,591.5 405.5,613.5 420.5,623.5 436.5,619.5 443.5,496.5 452.5,353.5 459.5,249.5 468.5,212.5 475.5,198.5 482.5,193.5 491.5,227.5 507.5,409.5 511.5,511.5 514.5,596.5 521.5,576.5 539.5,557.5 546.5,543.5 569.5,471.5 574.5,393.5 585.5,215.5 593.5,208.5 596.5,233.5 609.5,393.5 624.5,527.5 631.5,541.5 649.5,611.5 651.5,543.5 657.5,383.5 665.5,267.5 672.5,229.5 675.5,251.5 682.5,393.5 688.5,583.5 711.5,483.5 717.5,393.5 727.5,242.5 734.5,258.5 736.5,273.5 742.5,423.5 766.5,682.5 773.5,413.5 782.5,296.5 783.5,307.5 789.5,423.5 798.5,581.5 812.5,413.5 821.5,250.5 823.5,265.5 834.5,423.5 846.5,553.5 853.5,413.5 859.5,341.5 864.5,423.5 869.5,558.5 879.5,463.5 892.5,280.5 899.5,463.5 908.5,553.5 922.5,533.5 931.5,565.5 935.5,463.5 947.5,285.5 952.5,463.5 955.5,579.5 966.5,463.5 971.5,415.5 973.5,463.5 979.5,613.5 982.5,463.5 986.5,341.5 994.5,338.5 995.5,355.5 1000.5,543.5 1002.5,625.5 1006.5,533.5 1010.5,439.5 1014.5,543.5 1018.5,644.5 1022.5,533.5 1026.5,385.5 1034.5,426.5 1039.5,543.5 1041.5,621.5 1049.5,543.5 1057.5,713.5 1065.5,644.5 1073.5,713.5 1081.5,541.5 1089.5,526.5 1097.5,432.5 1104.5,510.5 1108.5,524.5" fill="none" stroke="#aaaaf2" stroke-width="1.1" stroke-linejoin="miter" stroke-miterlimit="2"/></svg>
<div class="t" style="left:96.88px;top:883.69px;font-size:11px;line-height:11px;font-weight:bold;color:#e4e4e4;-webkit-text-stroke:0.25px #e4e4e4;">20</div>
<div class="t" style="left:96.88px;top:846.69px;font-size:11px;line-height:11px;font-weight:bold;color:#e4e4e4;-webkit-text-stroke:0.25px #e4e4e4;">25</div>
<div class="t" style="left:96.88px;top:807.69px;font-size:11px;line-height:11px;font-weight:bold;color:#e4e4e4;-webkit-text-stroke:0.25px #e4e4e4;">30</div>
<div class="t" style="left:96.88px;top:768.69px;font-size:11px;line-height:11px;font-weight:bold;color:#e4e4e4;-webkit-text-stroke:0.25px #e4e4e4;">35</div>
<div class="t" style="left:96.88px;top:729.69px;font-size:11px;line-height:11px;font-weight:bold;color:#e4e4e4;-webkit-text-stroke:0.25px #e4e4e4;">40</div>
<div class="t" style="left:96.88px;top:690.69px;font-size:11px;line-height:11px;font-weight:bold;color:#e4e4e4;-webkit-text-stroke:0.25px #e4e4e4;">45</div>
<div class="t" style="left:96.88px;top:651.69px;font-size:11px;line-height:11px;font-weight:bold;color:#e4e4e4;-webkit-text-stroke:0.25px #e4e4e4;">50</div>
<div class="t" style="left:96.88px;top:612.69px;font-size:11px;line-height:11px;font-weight:bold;color:#e4e4e4;-webkit-text-stroke:0.25px #e4e4e4;">55</div>
<div class="t" style="left:96.88px;top:573.69px;font-size:11px;line-height:11px;font-weight:bold;color:#e4e4e4;-webkit-text-stroke:0.25px #e4e4e4;">60</div>
<div class="t" style="left:96.88px;top:534.69px;font-size:11px;line-height:11px;font-weight:bold;color:#e4e4e4;-webkit-text-stroke:0.25px #e4e4e4;">65</div>
<div class="t" style="left:96.88px;top:495.69px;font-size:11px;line-height:11px;font-weight:bold;color:#e4e4e4;-webkit-text-stroke:0.25px #e4e4e4;">70</div>
<div class="t" style="left:96.88px;top:456.69px;font-size:11px;line-height:11px;font-weight:bold;color:#e4e4e4;-webkit-text-stroke:0.25px #e4e4e4;">75</div>
<div class="t" style="left:96.88px;top:417.69px;font-size:11px;line-height:11px;font-weight:bold;color:#e4e4e4;-webkit-text-stroke:0.25px #e4e4e4;">80</div>
<div class="t" style="left:96.88px;top:378.69px;font-size:11px;line-height:11px;font-weight:bold;color:#e4e4e4;-webkit-text-stroke:0.25px #e4e4e4;">85</div>
<div class="t" style="left:96.88px;top:339.69px;font-size:11px;line-height:11px;font-weight:bold;color:#e4e4e4;-webkit-text-stroke:0.25px #e4e4e4;">90</div>
<div class="t" style="left:96.88px;top:300.69px;font-size:11px;line-height:11px;font-weight:bold;color:#e4e4e4;-webkit-text-stroke:0.25px #e4e4e4;">95</div>
<div class="t" style="left:90.76px;top:261.69px;font-size:11px;line-height:11px;font-weight:bold;color:#e4e4e4;-webkit-text-stroke:0.25px #e4e4e4;">100</div>
<div class="t" style="left:90.76px;top:222.69px;font-size:11px;line-height:11px;font-weight:bold;color:#e4e4e4;-webkit-text-stroke:0.25px #e4e4e4;">105</div>
<div class="t" style="left:91.37px;top:183.69px;font-size:11px;line-height:11px;font-weight:bold;color:#e4e4e4;-webkit-text-stroke:0.25px #e4e4e4;">110</div>
<div class="t" style="left:91.37px;top:144.69px;font-size:11px;line-height:11px;font-weight:bold;color:#e4e4e4;-webkit-text-stroke:0.25px #e4e4e4;">115</div>
<div class="t" style="left:90.76px;top:108.69px;font-size:11px;line-height:11px;font-weight:bold;color:#e4e4e4;-webkit-text-stroke:0.25px #e4e4e4;">120</div>
<div class="t" style="left:72.00px;top:117.69px;font-size:11px;line-height:11px;font-weight:bold;color:#e4e4e4;transform:scaleX(0.9393);transform-origin:0 0;-webkit-text-stroke:0.25px #e4e4e4;">dB SPL</div>
<div class="t" style="left:105.00px;top:894.69px;font-size:11px;line-height:11px;font-weight:bold;color:#e4e4e4;-webkit-text-stroke:0.25px #e4e4e4;">20</div>
<div class="t" style="left:355.00px;top:894.69px;font-size:11px;line-height:11px;font-weight:bold;color:#e4e4e4;-webkit-text-stroke:0.25px #e4e4e4;">50</div>
<div class="t" style="left:541.00px;top:894.69px;font-size:11px;line-height:11px;font-weight:bold;color:#e4e4e4;-webkit-text-stroke:0.25px #e4e4e4;">100</div>
<div class="t" style="left:729.00px;top:894.69px;font-size:11px;line-height:11px;font-weight:bold;color:#e4e4e4;-webkit-text-stroke:0.25px #e4e4e4;">200</div>
<div class="t" style="left:979.00px;top:894.69px;font-size:11px;line-height:11px;font-weight:bold;color:#e4e4e4;-webkit-text-stroke:0.25px #e4e4e4;">500</div>
<div class="t" style="left:1162.82px;top:894.69px;font-size:11px;line-height:11px;font-weight:bold;color:#e4e4e4;-webkit-text-stroke:0.25px #e4e4e4;">1kHz</div>
<div class="t" style="left:115.02px;top:109.76px;font-size:31px;line-height:31px;color:#dedede;transform:scaleX(0.9830);transform-origin:0 0;">37.459</div>
<div class="t" style="left:219.98px;top:111.84px;font-size:12px;line-height:12px;color:#dedede;transform:scaleX(1.0167);transform-origin:0 0;">Input Level</div>
<div class="t" style="left:221.00px;top:125.84px;font-size:12px;line-height:12px;color:#dedede;transform:scaleX(1.0163);transform-origin:0 0;">mV rms</div>
<div class="t" style="left:1088.00px;top:112.41px;font-size:21px;line-height:21px;font-family:'Liberation Serif',serif;color:#f2f2f2;transform:scaleX(1.0108);transform-origin:0 0;">True</div>
<div class="t" style="left:1128.00px;top:112.22px;font-size:21px;line-height:21px;font-weight:bold;font-style:italic;color:#ff0033;transform:scaleX(1.1235);transform-origin:0 0;">RTA</div>
<div class="a" style="left:1189px;top:106px;width:2px;height:800px;background:linear-gradient(90deg,#e6e4da 0 1px,#fff 1px)"></div>
<div class="t" style="left:1210.00px;top:108.84px;font-size:12px;line-height:12px;transform:scaleX(0.8313);transform-origin:0 0;">- Analyzer -</div>
<div class="a" style="left:1194px;top:131px;width:83px;height:36px;border:1px solid #aca899;box-shadow:1px 1px 0 #fff, inset 1px 1px 0 #fff"></div>
<div class="a" style="left:1202px;top:130px;width:39px;height:4px;background:#ece9d8"></div>
<div class="t" style="left:1204.00px;top:124.84px;font-size:12px;line-height:12px;transform:scaleX(0.9287);transform-origin:0 0;">dB Top</div>
<div class="btn" style="left:1194px;top:139px;width:17px;height:12px"><svg class="a" style="left:4px;top:3px" width="7" height="4"><polygon points="3.5,0 7,4 0,4" fill="#000"/></svg></div>
<div class="btn" style="left:1194px;top:151px;width:17px;height:13px"><svg class="a" style="left:4px;top:3px" width="7" height="4"><polygon points="0,0 7,0 3.5,4" fill="#000"/></svg></div>
<div class="edit" style="left:1211px;top:142px;width:62px;height:20px"></div>
<div class="a" style="left:1213px;top:144px;width:59px;height:14px;background:#316ac5"></div>
<div class="t" style="left:1214.00px;top:144.84px;font-size:12px;line-height:12px;color:#fff;transform:scaleX(0.8699);transform-origin:0 0;">120 dB SPL</div>
<div class="a" style="left:1194px;top:178px;width:83px;height:36px;border:1px solid #aca899;box-shadow:1px 1px 0 #fff, inset 1px 1px 0 #fff"></div>
<div class="a" style="left:1202px;top:177px;width:53px;height:4px;background:#ece9d8"></div>
<div class="t" style="left:1204.00px;top:172.84px;font-size:12px;line-height:12px;transform:scaleX(0.8745);transform-origin:0 0;">dB Bottom</div>
<div class="btn" style="left:1194px;top:186px;width:17px;height:12px"><svg class="a" style="left:4px;top:3px" width="7" height="4"><polygon points="3.5,0 7,4 0,4" fill="#000"/></svg></div>
<div class="btn" style="left:1194px;top:198px;width:17px;height:13px"><svg class="a" style="left:4px;top:3px" width="7" height="4"><polygon points="0,0 7,0 3.5,4" fill="#000"/></svg></div>
<div class="edit" style="left:1211px;top:189px;width:62px;height:20px"></div>
<div class="t" style="left:1214.00px;top:192.84px;font-size:12px;line-height:12px;transform:scaleX(0.8665);transform-origin:0 0;">20 dB SPL</div>
<div class="a" style="left:1194px;top:232px;width:83px;height:36px;border:1px solid #aca899;box-shadow:1px 1px 0 #fff, inset 1px 1px 0 #fff"></div>
<div class="a" style="left:1202px;top:231px;width:62px;height:4px;background:#ece9d8"></div>
<div class="t" style="left:1204.00px;top:226.84px;font-size:12px;line-height:12px;transform:scaleX(0.8445);transform-origin:0 0;">Hi Freq Limit</div>
<div class="btn" style="left:1194px;top:240px;width:17px;height:12px"><svg class="a" style="left:4px;top:3px" width="7" height="4"><polygon points="3.5,0 7,4 0,4" fill="#000"/></svg></div>
<div class="btn" style="left:1194px;top:252px;width:17px;height:13px"><svg class="a" style="left:4px;top:3px" width="7" height="4"><polygon points="0,0 7,0 3.5,4" fill="#000"/></svg></div>
<div class="edit" style="left:1211px;top:243px;width:62px;height:20px"></div>
<div class="t" style="left:1214.00px;top:246.84px;font-size:12px;line-height:12px;transform:scaleX(0.9128);transform-origin:0 0;">1 kHz</div>
<div class="a" style="left:1194px;top:279px;width:83px;height:36px;border:1px solid #aca899;box-shadow:1px 1px 0 #fff, inset 1px 1px 0 #fff"></div>
<div class="a" style="left:1202px;top:278px;width:64px;height:4px;background:#ece9d8"></div>
<div class="t" style="left:1204.00px;top:272.84px;font-size:12px;line-height:12px;transform:scaleX(0.8488);transform-origin:0 0;">Lo Freq Limit</div>
<div class="btn" style="left:1194px;top:287px;width:17px;height:12px"><svg class="a" style="left:4px;top:3px" width="7" height="4"><polygon points="3.5,0 7,4 0,4" fill="#000"/></svg></div>
<div class="btn" style="left:1194px;top:299px;width:17px;height:13px"><svg class="a" style="left:4px;top:3px" width="7" height="4"><polygon points="0,0 7,0 3.5,4" fill="#000"/></svg></div>
<div class="edit" style="left:1211px;top:290px;width:62px;height:20px"></div>
<div class="t" style="left:1214.00px;top:292.84px;font-size:12px;line-height:12px;transform:scaleX(0.8932);transform-origin:0 0;">20 Hz</div>
<div class="t" style="left:1195.00px;top:325.84px;font-size:12px;line-height:12px;transform:scaleX(0.8961);transform-origin:0 0;">RTA Resolution:</div>
<div class="edit" style="left:1195px;top:339px;width:81px;height:19px"><div class="btn" style="left:63px;top:1px;width:16px;height:15px"><svg class="a" style="left:3px;top:4px" width="8" height="5"><polygon points="0,0 8,0 4,4" fill="#000"/></svg></div></div>
<div class="t" style="left:1199.00px;top:342.84px;font-size:12px;line-height:12px;transform:scaleX(0.9306);transform-origin:0 0;">1/24 Oct.</div>
<div class="t" style="left:1195.00px;top:363.84px;font-size:12px;line-height:12px;transform:scaleX(0.8935);transform-origin:0 0;">Speed Tradeoff:</div>
<div class="edit" style="left:1195px;top:378px;width:81px;height:19px"><div class="btn" style="left:63px;top:1px;width:16px;height:15px"><svg class="a" style="left:3px;top:4px" width="8" height="5"><polygon points="0,0 8,0 4,4" fill="#000"/></svg></div></div>
<div class="t" style="left:1199.00px;top:381.84px;font-size:12px;line-height:12px;transform:scaleX(0.8707);transform-origin:0 0;">80 Hz (fast)</div>
<div class="t" style="left:1194.00px;top:402.84px;font-size:12px;line-height:12px;transform:scaleX(0.8976);transform-origin:0 0;">Averages:</div>
<div class="edit" style="left:1195px;top:415px;width:82px;height:19px"></div>
<div class="t" style="left:1257.00px;top:418.84px;font-size:12px;line-height:12px;transform:scaleX(0.8846);transform-origin:0 0;">100</div>
<div class="a" style="left:1189px;top:439px;width:91px;height:1px;background:#aca899"></div>
<div class="a" style="left:1189px;top:440px;width:91px;height:1px;background:#fff"></div>
<div class="a" style="left:0;top:906px;width:1280px;height:1px;background:#fff"></div>
<div class="a" style="left:68px;top:907px;width:631px;height:67px;background:#fff"></div>
<div class="a" style="left:712px;top:907px;width:1px;height:67px;background:#716f64"></div>
<div class="a" style="left:714px;top:907px;width:1px;height:67px;background:#fff"></div>
<div class="t" style="left:34.00px;top:909.69px;font-size:11px;line-height:11px;transform:scaleX(0.9453);transform-origin:0 0;">Notes:</div>
<div class="t" style="left:69.04px;top:909.69px;font-size:11px;line-height:11px;transform:scaleX(0.9636);transform-origin:0 0;white-space:pre;">.1. Project Filename: Untitled Project</div>
<div class="t" style="left:261.00px;top:909.69px;font-size:11px;line-height:11px;transform:scaleX(0.9810);transform-origin:0 0;white-space:pre;">Data acquired: 6Oct2007,  :36 AM</div>
<div class="t" style="left:69.04px;top:922.69px;font-size:11px;line-height:11px;transform:scaleX(0.9559);transform-origin:0 0;white-space:pre;">.2. Mic Cal File: newrsanalog.txt</div>
<div class="t" style="left:260.01px;top:922.69px;font-size:11px;line-height:11px;transform:scaleX(0.9924);transform-origin:0 0;white-space:pre;">Input f(s) = 48 kHz</div>
<div class="t" style="left:358.00px;top:922.69px;font-size:11px;line-height:11px;transform:scaleX(0.9671);transform-origin:0 0;white-space:pre;">Output f(s) = 48 kHz</div>
<div class="t" style="left:69.04px;top:935.69px;font-size:11px;line-height:11px;transform:scaleX(0.9562);transform-origin:0 0;white-space:pre;">.3. House Curve File: House Curve was OFF</div>
<div class="t" style="left:358.00px;top:935.69px;font-size:11px;line-height:11px;transform:scaleX(0.9561);transform-origin:0 0;white-space:pre;">FFT Size = 16 k</div>
<div class="t" style="left:69.03px;top:948.69px;font-size:11px;line-height:11px;transform:scaleX(0.9675);transform-origin:0 0;white-space:pre;">.4. Data was acquired manually</div>
<div class="t" style="left:309.01px;top:948.69px;font-size:11px;line-height:11px;transform:scaleX(0.9894);transform-origin:0 0;white-space:pre;">Input Selection: L</div>
<div class="t" style="left:454.00px;top:948.69px;font-size:11px;line-height:11px;transform:scaleX(0.9685);transform-origin:0 0;white-space:pre;">No. of Averages = 100</div>
<div class="t" style="left:69.04px;top:961.69px;font-size:11px;line-height:11px;transform:scaleX(0.9551);transform-origin:0 0;white-space:pre;">.5. Sound System Correction: ON</div>
<div class="t" style="left:310.00px;top:961.69px;font-size:11px;line-height:11px;transform:scaleX(0.9533);transform-origin:0 0;white-space:pre;">Relative Mode:  OFF</div>
<div class="t" style="left:454.00px;top:961.69px;font-size:11px;line-height:11px;transform:scaleX(0.9477);transform-origin:0 0;white-space:pre;">Peak Hold: OFF</div>
<div class="a" style="left:0;top:974px;width:1280px;height:1px;background:#aca899"></div>
<div class="a" style="left:0;top:975px;width:1280px;height:1px;background:#fff"></div>
<div class="t" style="left:2.00px;top:980.69px;font-size:11px;line-height:11px;">The analyzer is stopped...press Alt+Space to start.</div>
<div class="a" style="left:1015px;top:978px;width:155px;height:15px;border-top:1px solid #aca899;border-left:1px solid #aca899;border-right:1px solid #fff;border-bottom:1px solid #fff"></div>
<div class="a" style="left:1172px;top:978px;width:26px;height:15px;border-top:1px solid #aca899;border-left:1px solid #aca899;border-right:1px solid #fff;border-bottom:1px solid #fff"></div>
<div class="a" style="left:1199px;top:978px;width:28px;height:15px;border-top:1px solid #aca899;border-left:1px solid #aca899;border-right:1px solid #fff;border-bottom:1px solid #fff"></div>
<div class="a" style="left:1229px;top:978px;width:32px;height:15px;border-top:1px solid #aca899;border-left:1px solid #aca899;border-right:1px solid #fff;border-bottom:1px solid #fff"></div>
<div class="t" style="left:1020.00px;top:980.69px;font-size:11px;line-height:11px;transform:scaleX(0.9616);transform-origin:0 0;">4 % CPU Usage at Speed 2</div>
<div class="t" style="left:1201.00px;top:980.69px;font-size:11px;line-height:11px;transform:scaleX(0.9242);transform-origin:0 0;">NUM</div>
<svg class="a" style="left:1265px;top:980px" width="14" height="14"><path d="M12,2 L2,12 M12,6 L6,12 M12,10 L10,12" stroke="#aca899" stroke-width="1.2"/></svg>
<div class="a" style="left:0;top:993px;width:1280px;height:1px;background:#fff"></div>
<div class="a" style="left:0;top:994px;width:1280px;height:4px;background:linear-gradient(#2f6fd8,#3a82e8)"></div>
<div class="a" style="left:0;top:994px;width:94px;height:4px;background:linear-gradient(#3a913a,#5cb55c)"></div>
<div class="a" style="left:1188px;top:994px;width:92px;height:4px;background:linear-gradient(#0c94e6,#18aaf0)"></div>
</body></html>
